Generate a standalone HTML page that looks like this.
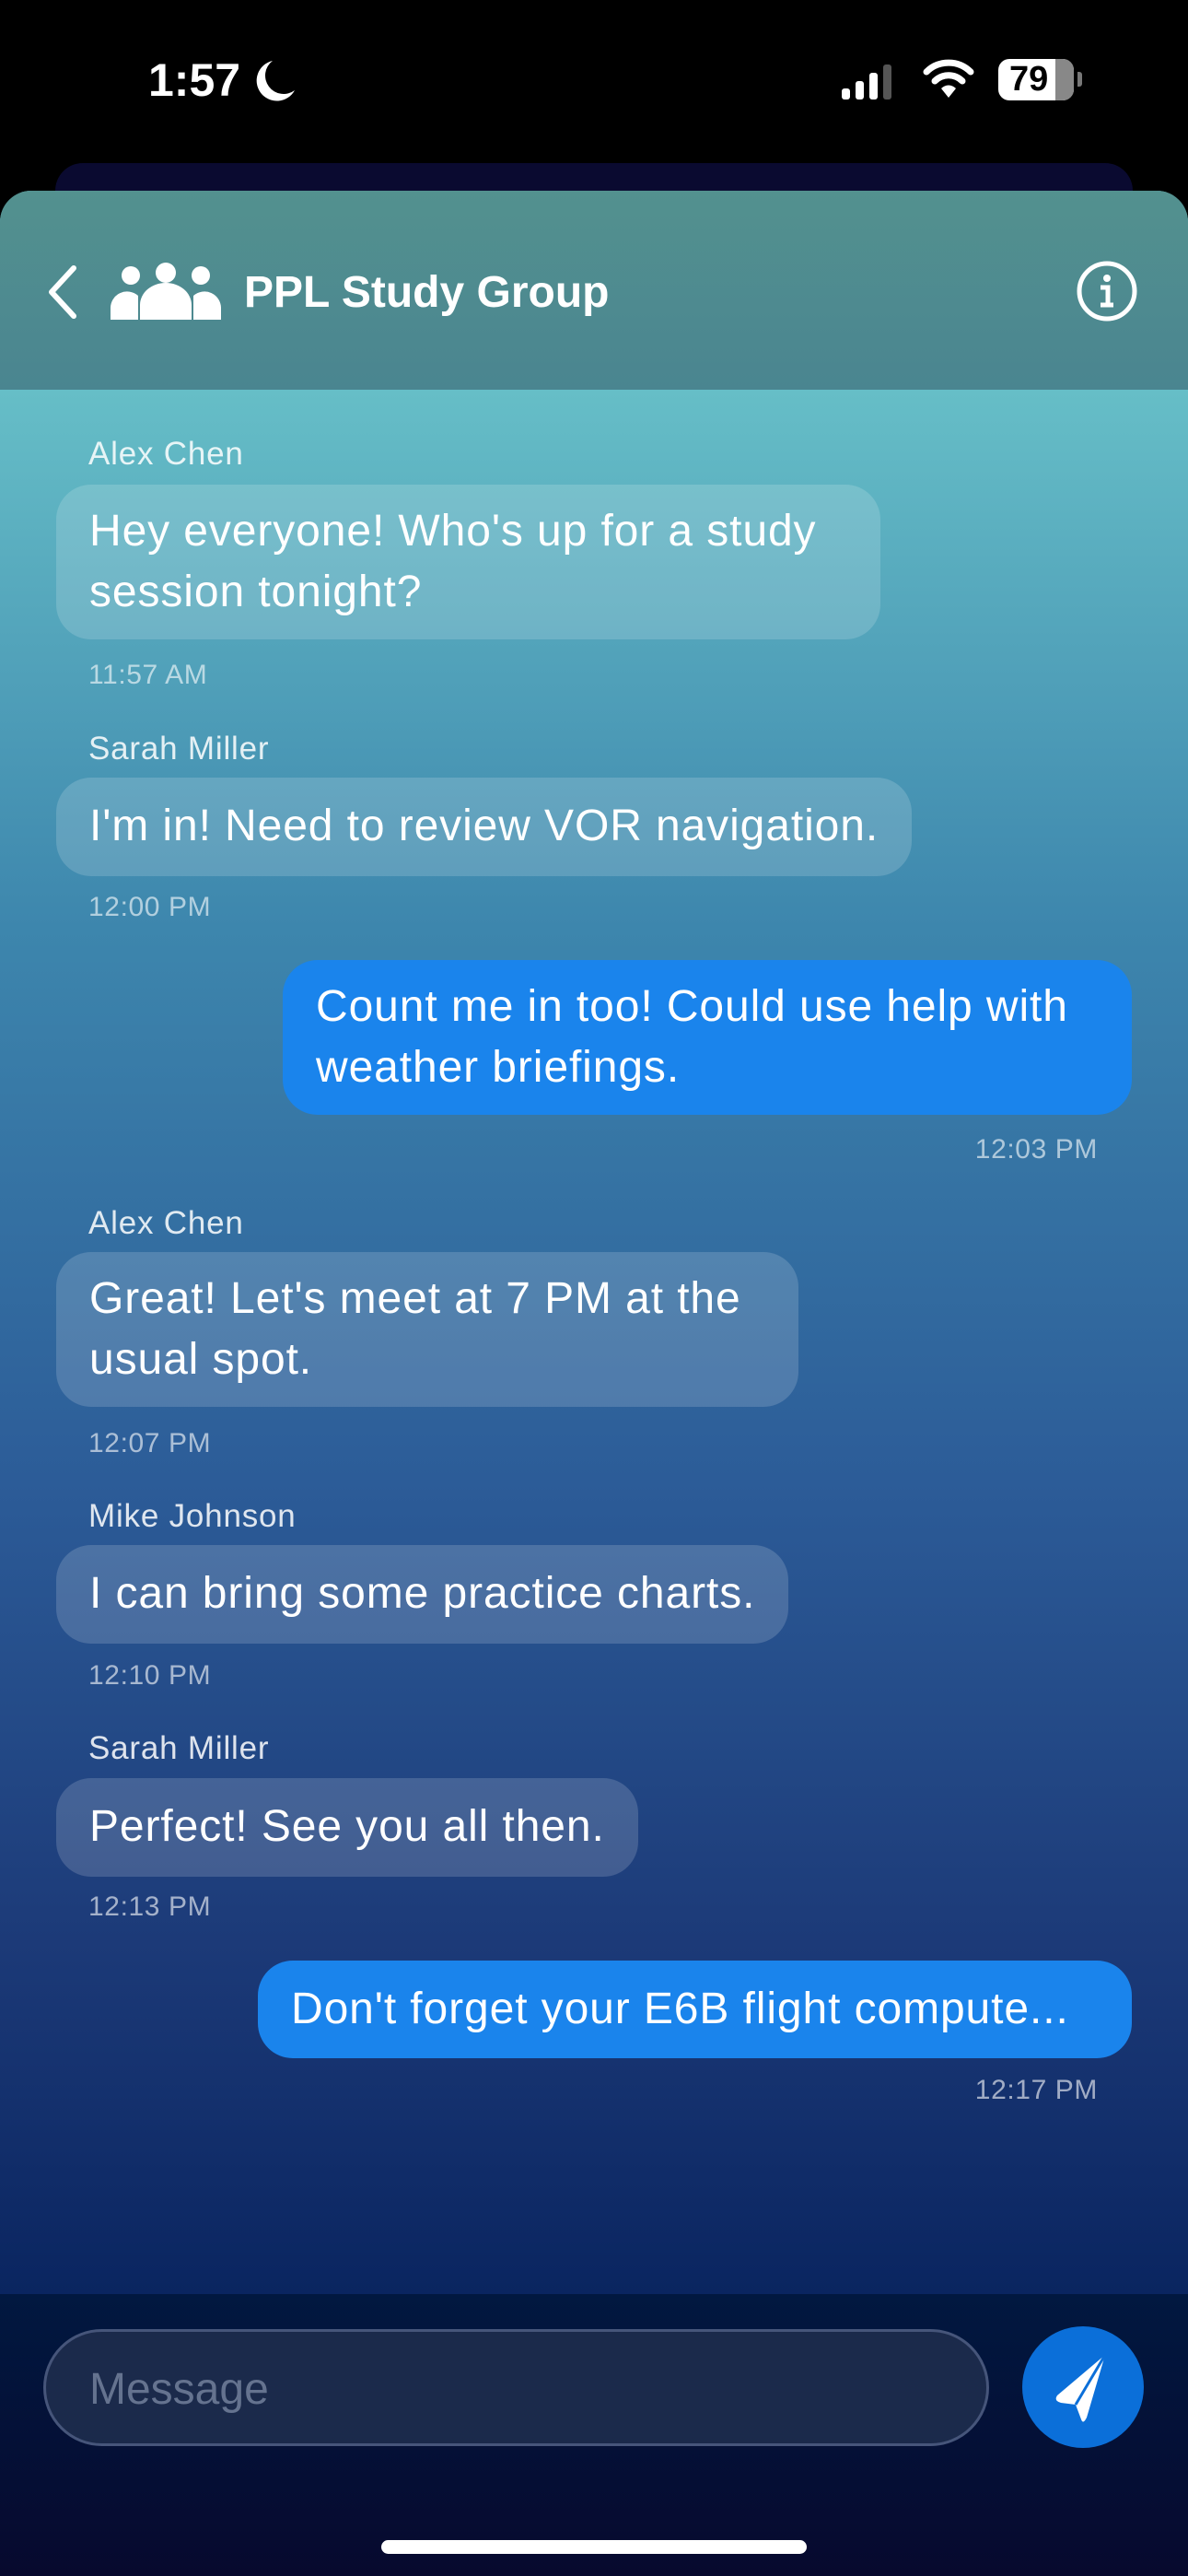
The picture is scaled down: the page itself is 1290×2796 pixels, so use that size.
<!DOCTYPE html>
<html><head><meta charset="utf-8"><style>
*{margin:0;padding:0;box-sizing:border-box}
body{width:1290px;height:2796px;background:#000;position:relative;overflow:hidden;font-family:"Liberation Sans",sans-serif;color:#fff}
.abs{position:absolute}
.sheetback{left:60px;top:177px;width:1170px;height:60px;background:#0a0a30;border-radius:30px 30px 0 0}
.sheet{left:0;top:207px;width:1290px;height:2589px;border-radius:34px 34px 0 0;overflow:hidden;background:linear-gradient(#66bec7 216px,#3d86ad 800px,#2c5c98 1400px,#1c3a78 1900px,#0a2560 2283px)}
.hdr{left:0;top:0;width:1290px;height:216px;background:linear-gradient(#53918f,#4a8590)}
.name{font-size:35px;color:rgba(255,255,255,0.85);left:96px;letter-spacing:0.8px}
.time{font-size:30px;color:rgba(255,255,255,0.6);letter-spacing:0.6px}
.b{font-size:48px;line-height:66px;padding:18px 36px;border-radius:38px;background:rgba(255,255,255,0.16);letter-spacing:0.9px;white-space:nowrap}
.me{background:#1a84ec}
.bottom{left:0;top:2283px;width:1290px;height:306px;background:linear-gradient(#011840,#07092e)}
</style></head><body>
<div class="abs" style="left:161px;top:58px;font-size:50px;font-weight:bold">1:57</div>
<svg class="abs" style="left:276px;top:64px" width="46" height="48" viewBox="0 0 46 48"><path d="M20 2 A22 22 0 1 0 44 34 A20 20 0 0 1 20 2Z" fill="#fff"/></svg>
<svg class="abs" style="left:912px;top:66px" width="70" height="44"><rect x="2" y="30" width="9" height="12" rx="3" fill="#fff"/><rect x="17" y="22" width="9" height="20" rx="3" fill="#fff"/><rect x="32" y="13" width="9" height="29" rx="3" fill="#fff"/><rect x="47" y="4" width="9" height="38" rx="3" fill="#555"/></svg>
<svg class="abs" style="left:1002px;top:62px" width="56" height="46" viewBox="0 0 56 46"><path d="M4 16a34 34 0 0 1 48 0" stroke="#fff" stroke-width="7" fill="none" stroke-linecap="round"/><path d="M13 26a21 21 0 0 1 30 0" stroke="#fff" stroke-width="7" fill="none" stroke-linecap="round"/><path d="M20 34l8 10 8-10a11 11 0 0 0-16 0z" fill="#fff"/></svg>
<div class="abs" style="left:1084px;top:64px;width:82px;height:45px;border-radius:12px;background:#fff;overflow:hidden"><div style="position:absolute;right:0;top:0;width:20px;height:45px;background:#888"></div><div style="position:absolute;left:12px;top:0;font-size:38px;font-weight:bold;color:#000;line-height:45px">79</div></div>
<div class="abs" style="left:1170px;top:78px;width:5px;height:16px;border-radius:0 3px 3px 0;background:#777"></div>
<div class="abs sheetback"></div>
<div class="abs sheet">
 <div class="abs hdr">
  <svg class="abs" style="left:48px;top:80px" width="40" height="60"><path d="M32 4 L8 30 L32 56" stroke="#fff" stroke-width="6" fill="none" stroke-linecap="round" stroke-linejoin="round"/></svg>
  <svg class="abs" style="left:120px;top:78px" width="120" height="64" viewBox="0 0 120 64"><circle cx="22" cy="14" r="10" fill="#fff"/><circle cx="60" cy="11" r="11" fill="#fff"/><circle cx="98" cy="14" r="10" fill="#fff"/><path d="M0 62v-12a18 18 0 0 1 30-14v26z M90 62v-26a18 18 0 0 1 30 14v12z" fill="#fff"/><path d="M32 62v-16a28 24 0 0 1 56 0v16z" fill="#fff"/></svg>
  <div class="abs" style="left:265px;top:83px;font-size:48px;font-weight:bold">PPL Study Group</div>
  <svg class="abs" style="left:1168px;top:75px" width="68" height="68"><circle cx="34" cy="34" r="30" stroke="#fff" stroke-width="5" fill="none"/><circle cx="34" cy="20" r="4" fill="#fff"/><path d="M27 30h8v18M27 49h14" stroke="#fff" stroke-width="5" fill="none"/></svg>
 </div>
 <div class="abs name" style="top:266px">Alex Chen</div>
 <div class="abs b" style="left:61px;top:319px;width:895px">Hey everyone! Who's up for a study<br>session tonight?</div>
 <div class="abs time" style="left:96px;top:509px">11:57 AM</div>
 <div class="abs name" style="top:586px">Sarah Miller</div>
 <div class="abs b" style="left:61px;top:637px;height:107px;padding-top:20px">I'm in! Need to review VOR navigation.</div>
 <div class="abs time" style="left:96px;top:761px">12:00 PM</div>
 <div class="abs b me" style="left:307px;top:835px;width:922px">Count me in too! Could use help with<br>weather briefings.</div>
 <div class="abs time" style="right:98px;top:1024px">12:03 PM</div>
 <div class="abs name" style="top:1101px">Alex Chen</div>
 <div class="abs b" style="left:61px;top:1152px;width:806px">Great! Let's meet at 7 PM at the<br>usual spot.</div>
 <div class="abs time" style="left:96px;top:1343px">12:07 PM</div>
 <div class="abs name" style="top:1419px">Mike Johnson</div>
 <div class="abs b" style="left:61px;top:1470px;height:107px;padding-top:20px">I can bring some practice charts.</div>
 <div class="abs time" style="left:96px;top:1595px">12:10 PM</div>
 <div class="abs name" style="top:1671px">Sarah Miller</div>
 <div class="abs b" style="left:61px;top:1723px;height:107px;padding-top:20px">Perfect! See you all then.</div>
 <div class="abs time" style="left:96px;top:1846px">12:13 PM</div>
 <div class="abs b me" style="left:280px;top:1921px;width:949px;height:106px;padding-top:20px">Don't forget your E6B flight compute...</div>
 <div class="abs time" style="right:98px;top:2045px">12:17 PM</div>
 <div class="abs bottom">
  <div class="abs" style="left:47px;top:38px;width:1027px;height:127px;border-radius:64px;background:#1b2a4b;border:3px solid #46557a"></div>
  <div class="abs" style="left:97px;top:76px;font-size:48px;color:#65738f">Message</div>
  <div class="abs" style="left:1110px;top:35px;width:132px;height:132px;border-radius:50%;background:#0b6fd9"></div>
  <svg class="abs" style="left:1136px;top:60px" width="80" height="80" viewBox="0 0 80 80"><path d="M64 6 L12 50 Q8 56 16 58 L32 60 L38 76 Q40 82 44 74 Z" fill="#fff"/><path d="M64 6 L32 60" stroke="#0b6fd9" stroke-width="3"/></svg>
  <div class="abs" style="left:414px;top:267px;width:462px;height:15px;border-radius:8px;background:#fff"></div>
 </div>
</div>
</body></html>
